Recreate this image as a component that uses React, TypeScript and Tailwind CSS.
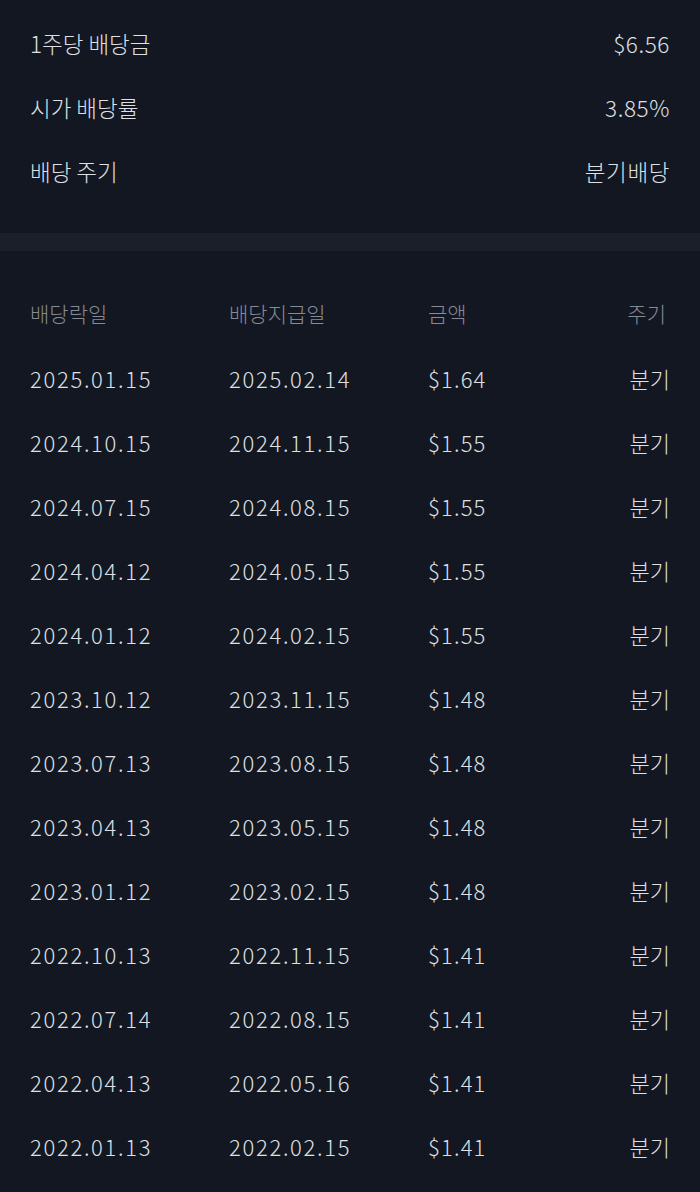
import React from 'react';

const summary = [
  { label: '1주당 배당금', value: '$6.56' },
  { label: '시가 배당률', value: '3.85%' },
  { label: '배당 주기', value: '분기배당' },
];

const rows = [
  ['2025.01.15', '2025.02.14', '$1.64'],
  ['2024.10.15', '2024.11.15', '$1.55'],
  ['2024.07.15', '2024.08.15', '$1.55'],
  ['2024.04.12', '2024.05.15', '$1.55'],
  ['2024.01.12', '2024.02.15', '$1.55'],
  ['2023.10.12', '2023.11.15', '$1.48'],
  ['2023.07.13', '2023.08.15', '$1.48'],
  ['2023.04.13', '2023.05.15', '$1.48'],
  ['2023.01.12', '2023.02.15', '$1.48'],
  ['2022.10.13', '2022.11.15', '$1.41'],
  ['2022.07.14', '2022.08.15', '$1.41'],
  ['2022.04.13', '2022.05.16', '$1.41'],
  ['2022.01.13', '2022.02.15', '$1.41'],
];

export default function App() {
  return (
    <div
      className="min-h-[1192px] bg-[#131722] font-light text-[#dfe0e4]"
      style={{ fontFamily: '"Noto Sans CJK KR", "Noto Sans", sans-serif' }}
    >
      <div className="px-[30px] pt-[12px] pb-[29px]">
        {summary.map((item) => (
          <div key={item.label} className="flex h-[64px] items-center justify-between text-[22.5px]">
            <span>{item.label}</span>
            <span className="tracking-[0.6px]">{item.value}</span>
          </div>
        ))}
      </div>

      <div className="h-[18px] bg-[#1b1f29]" />

      <div className="px-[30px] pt-[31px]">
        <div className="grid h-[64px] grid-cols-[199px_199px_1fr_auto] items-center text-[21px] text-[#868a94]">
          <span>배당락일</span>
          <span>배당지급일</span>
          <span>금액</span>
          <span className="pr-[4px] text-right">주기</span>
        </div>
        {rows.map((r) => (
          <div
            key={r[0]}
            className="grid h-[64px] grid-cols-[199px_199px_1fr_auto] items-center text-[22px]"
          >
            <span className="tracking-[1.7px]">{r[0]}</span>
            <span className="tracking-[1.7px]">{r[1]}</span>
            <span className="tracking-[1.2px]">{r[2]}</span>
            <span className="text-right">분기</span>
          </div>
        ))}
      </div>
    </div>
  );
}
